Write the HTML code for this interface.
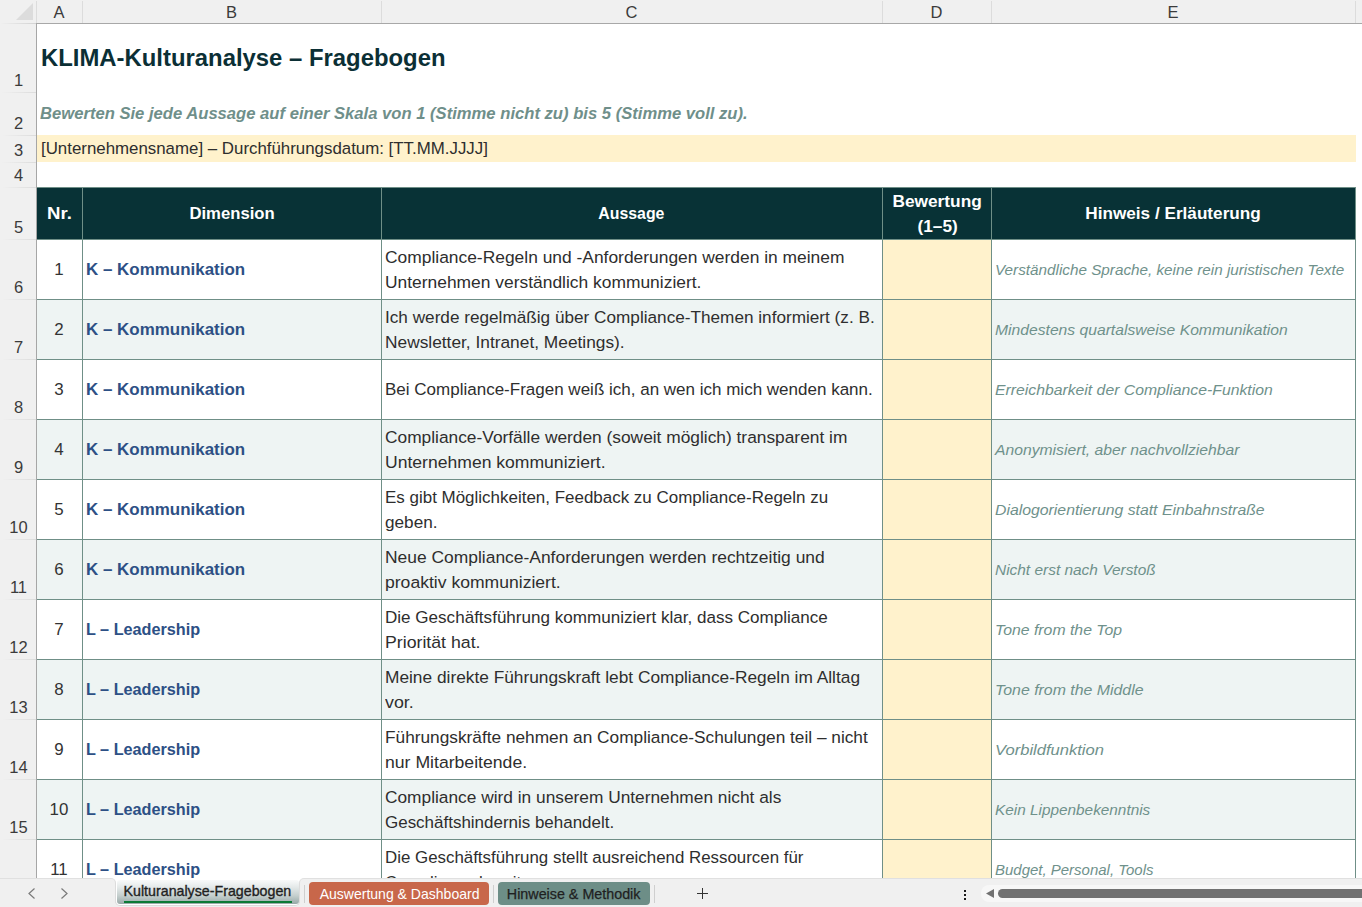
<!DOCTYPE html>
<html><head><meta charset="utf-8"><style>
html,body{margin:0;padding:0;}
body{width:1362px;height:907px;overflow:hidden;position:relative;background:#fff;font-family:"Liberation Sans",sans-serif;}
.t{position:absolute;white-space:nowrap;}
.r{position:absolute;}
</style></head><body>
<div class="r" style="left:0px;top:0px;width:1362px;height:23px;background:#f0f0f0;"></div>
<div class="r" style="left:0px;top:23px;width:36px;height:1px;background:linear-gradient(to right,#f0f0f0,#d2d2d2);"></div>
<div class="r" style="left:36px;top:23px;width:1326px;height:1px;background:#a8a8a8;"></div>
<svg class="r" style="left:16px;top:3px" width="18" height="18"><polygon points="17,0 17,17 0,17" fill="#dcdcdc"/></svg>
<div class="r" style="left:36px;top:1px;width:1px;height:22px;background:#dcdcdc;"></div>
<div class="r" style="left:82px;top:1px;width:1px;height:22px;background:#dcdcdc;"></div>
<div class="r" style="left:381px;top:1px;width:1px;height:22px;background:#dcdcdc;"></div>
<div class="r" style="left:882px;top:1px;width:1px;height:22px;background:#dcdcdc;"></div>
<div class="r" style="left:991px;top:1px;width:1px;height:22px;background:#dcdcdc;"></div>
<div class="r" style="left:1355px;top:1px;width:1px;height:22px;background:#dcdcdc;"></div>
<div id="t0" class="t" style="left:36px;top:1.78px;width:46px;font-size:16.5px;line-height:21px;color:#3b3b3b;font-weight:normal;font-style:normal;text-align:center;">A</div>
<div id="t1" class="t" style="left:82px;top:1.78px;width:299px;font-size:16.5px;line-height:21px;color:#3b3b3b;font-weight:normal;font-style:normal;text-align:center;">B</div>
<div id="t2" class="t" style="left:381px;top:1.78px;width:501px;font-size:16.5px;line-height:21px;color:#3b3b3b;font-weight:normal;font-style:normal;text-align:center;">C</div>
<div id="t3" class="t" style="left:882px;top:1.78px;width:109px;font-size:16.5px;line-height:21px;color:#3b3b3b;font-weight:normal;font-style:normal;text-align:center;">D</div>
<div id="t4" class="t" style="left:991px;top:1.78px;width:364px;font-size:16.5px;line-height:21px;color:#3b3b3b;font-weight:normal;font-style:normal;text-align:center;">E</div>
<div class="r" style="left:0px;top:24px;width:36px;height:883px;background:#f0f0f0;"></div>
<div class="r" style="left:36px;top:24px;width:1px;height:883px;background:#a6a6a6;"></div>
<div class="r" style="left:0px;top:92px;width:36px;height:1px;background:linear-gradient(to right,#f0f0f0 5%,#dcdcdc);"></div>
<div id="t5" class="t" style="left:0px;top:70.18px;width:37px;font-size:16.5px;line-height:21px;color:#3b3b3b;font-weight:normal;font-style:normal;text-align:center;">1</div>
<div class="r" style="left:0px;top:135px;width:36px;height:1px;background:linear-gradient(to right,#f0f0f0 5%,#dcdcdc);"></div>
<div id="t6" class="t" style="left:0px;top:113.18px;width:37px;font-size:16.5px;line-height:21px;color:#3b3b3b;font-weight:normal;font-style:normal;text-align:center;">2</div>
<div class="r" style="left:0px;top:162px;width:36px;height:1px;background:linear-gradient(to right,#f0f0f0 5%,#dcdcdc);"></div>
<div id="t7" class="t" style="left:0px;top:140.18px;width:37px;font-size:16.5px;line-height:21px;color:#3b3b3b;font-weight:normal;font-style:normal;text-align:center;">3</div>
<div class="r" style="left:0px;top:187px;width:36px;height:1px;background:linear-gradient(to right,#f0f0f0 5%,#dcdcdc);"></div>
<div id="t8" class="t" style="left:0px;top:165.18px;width:37px;font-size:16.5px;line-height:21px;color:#3b3b3b;font-weight:normal;font-style:normal;text-align:center;">4</div>
<div class="r" style="left:0px;top:239px;width:36px;height:1px;background:linear-gradient(to right,#f0f0f0 5%,#dcdcdc);"></div>
<div id="t9" class="t" style="left:0px;top:217.18px;width:37px;font-size:16.5px;line-height:21px;color:#3b3b3b;font-weight:normal;font-style:normal;text-align:center;">5</div>
<div class="r" style="left:0px;top:299px;width:36px;height:1px;background:linear-gradient(to right,#f0f0f0 5%,#dcdcdc);"></div>
<div id="t10" class="t" style="left:0px;top:277.18px;width:37px;font-size:16.5px;line-height:21px;color:#3b3b3b;font-weight:normal;font-style:normal;text-align:center;">6</div>
<div class="r" style="left:0px;top:359px;width:36px;height:1px;background:linear-gradient(to right,#f0f0f0 5%,#dcdcdc);"></div>
<div id="t11" class="t" style="left:0px;top:337.18px;width:37px;font-size:16.5px;line-height:21px;color:#3b3b3b;font-weight:normal;font-style:normal;text-align:center;">7</div>
<div class="r" style="left:0px;top:419px;width:36px;height:1px;background:linear-gradient(to right,#f0f0f0 5%,#dcdcdc);"></div>
<div id="t12" class="t" style="left:0px;top:397.18px;width:37px;font-size:16.5px;line-height:21px;color:#3b3b3b;font-weight:normal;font-style:normal;text-align:center;">8</div>
<div class="r" style="left:0px;top:479px;width:36px;height:1px;background:linear-gradient(to right,#f0f0f0 5%,#dcdcdc);"></div>
<div id="t13" class="t" style="left:0px;top:457.18px;width:37px;font-size:16.5px;line-height:21px;color:#3b3b3b;font-weight:normal;font-style:normal;text-align:center;">9</div>
<div class="r" style="left:0px;top:539px;width:36px;height:1px;background:linear-gradient(to right,#f0f0f0 5%,#dcdcdc);"></div>
<div id="t14" class="t" style="left:0px;top:517.18px;width:37px;font-size:16.5px;line-height:21px;color:#3b3b3b;font-weight:normal;font-style:normal;text-align:center;">10</div>
<div class="r" style="left:0px;top:599px;width:36px;height:1px;background:linear-gradient(to right,#f0f0f0 5%,#dcdcdc);"></div>
<div id="t15" class="t" style="left:0px;top:577.18px;width:37px;font-size:16.5px;line-height:21px;color:#3b3b3b;font-weight:normal;font-style:normal;text-align:center;">11</div>
<div class="r" style="left:0px;top:659px;width:36px;height:1px;background:linear-gradient(to right,#f0f0f0 5%,#dcdcdc);"></div>
<div id="t16" class="t" style="left:0px;top:637.18px;width:37px;font-size:16.5px;line-height:21px;color:#3b3b3b;font-weight:normal;font-style:normal;text-align:center;">12</div>
<div class="r" style="left:0px;top:719px;width:36px;height:1px;background:linear-gradient(to right,#f0f0f0 5%,#dcdcdc);"></div>
<div id="t17" class="t" style="left:0px;top:697.18px;width:37px;font-size:16.5px;line-height:21px;color:#3b3b3b;font-weight:normal;font-style:normal;text-align:center;">13</div>
<div class="r" style="left:0px;top:779px;width:36px;height:1px;background:linear-gradient(to right,#f0f0f0 5%,#dcdcdc);"></div>
<div id="t18" class="t" style="left:0px;top:757.18px;width:37px;font-size:16.5px;line-height:21px;color:#3b3b3b;font-weight:normal;font-style:normal;text-align:center;">14</div>
<div class="r" style="left:0px;top:839px;width:36px;height:1px;background:linear-gradient(to right,#f0f0f0 5%,#dcdcdc);"></div>
<div id="t19" class="t" style="left:0px;top:817.18px;width:37px;font-size:16.5px;line-height:21px;color:#3b3b3b;font-weight:normal;font-style:normal;text-align:center;">15</div>
<div class="r" style="left:0px;top:899px;width:36px;height:1px;background:linear-gradient(to right,#f0f0f0 5%,#dcdcdc);"></div>
<div id="t20" class="t" style="left:0px;top:877.18px;width:37px;font-size:16.5px;line-height:21px;color:#3b3b3b;font-weight:normal;font-style:normal;text-align:center;">16</div>
<div id="t21" class="t" style="left:41px;top:42.68px;font-size:24px;line-height:30px;color:#0b2f35;font-weight:bold;font-style:normal;text-align:left;transform:translateX(0.00px) scaleX(0.9946);transform-origin:left center;">KLIMA-Kulturanalyse – Fragebogen</div>
<div id="t22" class="t" style="left:40px;top:102.58px;font-size:16.5px;line-height:21px;color:#6f8f8a;font-weight:bold;font-style:italic;text-align:left;transform:translateX(0.00px) scaleX(1.0071);transform-origin:left center;">Bewerten Sie jede Aussage auf einer Skala von 1 (Stimme nicht zu) bis 5 (Stimme voll zu).</div>
<div class="r" style="left:37px;top:135px;width:1319px;height:27px;background:#fff2cc;"></div>
<div id="t23" class="t" style="left:41px;top:138.48px;font-size:16.8px;line-height:21px;color:#2e2e2e;font-weight:normal;font-style:normal;text-align:left;transform:translateX(0.00px) scaleX(1.0045);transform-origin:left center;">[Unternehmensname] – Durchführungsdatum: [TT.MM.JJJJ]</div>
<div class="r" style="left:37px;top:187px;width:1318px;height:52px;background:#083236;"></div>
<div class="r" style="left:37px;top:239px;width:1318px;height:60px;background:#ffffff;"></div>
<div class="r" style="left:882px;top:239px;width:109px;height:60px;background:#fff2cc;"></div>
<div class="r" style="left:37px;top:299px;width:1318px;height:60px;background:#eef4f3;"></div>
<div class="r" style="left:882px;top:299px;width:109px;height:60px;background:#fff2cc;"></div>
<div class="r" style="left:37px;top:359px;width:1318px;height:60px;background:#ffffff;"></div>
<div class="r" style="left:882px;top:359px;width:109px;height:60px;background:#fff2cc;"></div>
<div class="r" style="left:37px;top:419px;width:1318px;height:60px;background:#eef4f3;"></div>
<div class="r" style="left:882px;top:419px;width:109px;height:60px;background:#fff2cc;"></div>
<div class="r" style="left:37px;top:479px;width:1318px;height:60px;background:#ffffff;"></div>
<div class="r" style="left:882px;top:479px;width:109px;height:60px;background:#fff2cc;"></div>
<div class="r" style="left:37px;top:539px;width:1318px;height:60px;background:#eef4f3;"></div>
<div class="r" style="left:882px;top:539px;width:109px;height:60px;background:#fff2cc;"></div>
<div class="r" style="left:37px;top:599px;width:1318px;height:60px;background:#ffffff;"></div>
<div class="r" style="left:882px;top:599px;width:109px;height:60px;background:#fff2cc;"></div>
<div class="r" style="left:37px;top:659px;width:1318px;height:60px;background:#eef4f3;"></div>
<div class="r" style="left:882px;top:659px;width:109px;height:60px;background:#fff2cc;"></div>
<div class="r" style="left:37px;top:719px;width:1318px;height:60px;background:#ffffff;"></div>
<div class="r" style="left:882px;top:719px;width:109px;height:60px;background:#fff2cc;"></div>
<div class="r" style="left:37px;top:779px;width:1318px;height:60px;background:#eef4f3;"></div>
<div class="r" style="left:882px;top:779px;width:109px;height:60px;background:#fff2cc;"></div>
<div class="r" style="left:37px;top:839px;width:1318px;height:60px;background:#ffffff;"></div>
<div class="r" style="left:882px;top:839px;width:109px;height:60px;background:#fff2cc;"></div>
<div class="r" style="left:37px;top:299px;width:1318px;height:1px;background:#6f8f87;"></div>
<div class="r" style="left:37px;top:359px;width:1318px;height:1px;background:#6f8f87;"></div>
<div class="r" style="left:37px;top:419px;width:1318px;height:1px;background:#6f8f87;"></div>
<div class="r" style="left:37px;top:479px;width:1318px;height:1px;background:#6f8f87;"></div>
<div class="r" style="left:37px;top:539px;width:1318px;height:1px;background:#6f8f87;"></div>
<div class="r" style="left:37px;top:599px;width:1318px;height:1px;background:#6f8f87;"></div>
<div class="r" style="left:37px;top:659px;width:1318px;height:1px;background:#6f8f87;"></div>
<div class="r" style="left:37px;top:719px;width:1318px;height:1px;background:#6f8f87;"></div>
<div class="r" style="left:37px;top:779px;width:1318px;height:1px;background:#6f8f87;"></div>
<div class="r" style="left:37px;top:839px;width:1318px;height:1px;background:#6f8f87;"></div>
<div class="r" style="left:37px;top:899px;width:1318px;height:1px;background:#6f8f87;"></div>
<div class="r" style="left:82px;top:187px;width:1px;height:720px;background:#6f8f87;"></div>
<div class="r" style="left:381px;top:187px;width:1px;height:720px;background:#6f8f87;"></div>
<div class="r" style="left:882px;top:187px;width:1px;height:720px;background:#6f8f87;"></div>
<div class="r" style="left:991px;top:187px;width:1px;height:720px;background:#6f8f87;"></div>
<div class="r" style="left:1355px;top:187px;width:1px;height:720px;background:#6f8f87;"></div>
<div class="r" style="left:36px;top:187px;width:1px;height:720px;background:#a6a6a6;"></div>
<div class="r" style="left:37px;top:187px;width:1318px;height:1px;background:#6f8f87;"></div>
<div class="r" style="left:37px;top:239px;width:1318px;height:1px;background:#6f8f87;"></div>
<div id="t24" class="t" style="left:36px;top:202.64px;width:46px;font-size:16.9px;line-height:21px;color:#ffffff;font-weight:bold;font-style:normal;text-align:center;transform:translateX(0.50px) scaleX(1.1000);transform-origin:center center;">Nr.</div>
<div id="t25" class="t" style="left:82px;top:202.64px;width:299px;font-size:16.9px;line-height:21px;color:#ffffff;font-weight:bold;font-style:normal;text-align:center;transform:translateX(0.55px) scaleX(0.9871);transform-origin:center center;">Dimension</div>
<div id="t26" class="t" style="left:381px;top:202.64px;width:501px;font-size:16.9px;line-height:21px;color:#ffffff;font-weight:bold;font-style:normal;text-align:center;transform:translateX(-0.10px) scaleX(0.9391);transform-origin:center center;">Aussage</div>
<div id="t27" class="t" style="left:882px;top:190.64px;width:109px;font-size:16.9px;line-height:21px;color:#ffffff;font-weight:bold;font-style:normal;text-align:center;transform:translateX(0.60px) scaleX(1.0235);transform-origin:center center;">Bewertung</div>
<div id="t28" class="t" style="left:882px;top:215.64px;width:109px;font-size:16.9px;line-height:21px;color:#ffffff;font-weight:bold;font-style:normal;text-align:center;transform:translateX(1.15px) scaleX(1.0179);transform-origin:center center;">(1–5)</div>
<div id="t29" class="t" style="left:991px;top:202.64px;width:364px;font-size:16.9px;line-height:21px;color:#ffffff;font-weight:bold;font-style:normal;text-align:center;transform:translateX(0.05px) scaleX(1.0158);transform-origin:center center;">Hinweis / Erläuterung</div>
<div id="t30" class="t" style="left:36px;top:258.64px;width:46px;font-size:16.9px;line-height:21px;color:#333333;font-weight:normal;font-style:normal;text-align:center;">1</div>
<div id="t31" class="t" style="left:86px;top:258.64px;font-size:16.9px;line-height:21px;color:#2d5085;font-weight:bold;font-style:normal;text-align:left;transform:translateX(0.00px) scaleX(1.0032);transform-origin:left center;">K – Kommunikation</div>
<div id="t32" class="t" style="left:385px;top:246.74px;font-size:16.9px;line-height:21px;color:#2e2e2e;font-weight:normal;font-style:normal;text-align:left;transform:translateX(0.00px) scaleX(1.0301);transform-origin:left center;">Compliance-Regeln und -Anforderungen werden in meinem</div>
<div id="t33" class="t" style="left:385px;top:271.74px;font-size:16.9px;line-height:21px;color:#2e2e2e;font-weight:normal;font-style:normal;text-align:left;transform:translateX(0.00px) scaleX(1.0307);transform-origin:left center;">Unternehmen verständlich kommuniziert.</div>
<div id="t34" class="t" style="left:995px;top:260.20px;font-size:15.3px;line-height:19px;color:#6f918b;font-weight:normal;font-style:italic;text-align:left;transform:translateX(0.00px) scaleX(0.9977);transform-origin:left center;">Verständliche Sprache, keine rein juristischen Texte</div>
<div id="t35" class="t" style="left:36px;top:318.64px;width:46px;font-size:16.9px;line-height:21px;color:#333333;font-weight:normal;font-style:normal;text-align:center;">2</div>
<div id="t36" class="t" style="left:86px;top:318.64px;font-size:16.9px;line-height:21px;color:#2d5085;font-weight:bold;font-style:normal;text-align:left;transform:translateX(0.00px) scaleX(1.0032);transform-origin:left center;">K – Kommunikation</div>
<div id="t37" class="t" style="left:385px;top:306.74px;font-size:16.9px;line-height:21px;color:#2e2e2e;font-weight:normal;font-style:normal;text-align:left;transform:translateX(0.00px) scaleX(1.0169);transform-origin:left center;">Ich werde regelmäßig über Compliance-Themen informiert (z. B.</div>
<div id="t38" class="t" style="left:385px;top:331.74px;font-size:16.9px;line-height:21px;color:#2e2e2e;font-weight:normal;font-style:normal;text-align:left;transform:translateX(0.00px) scaleX(1.0253);transform-origin:left center;">Newsletter, Intranet, Meetings).</div>
<div id="t39" class="t" style="left:995px;top:320.20px;font-size:15.3px;line-height:19px;color:#6f918b;font-weight:normal;font-style:italic;text-align:left;transform:translateX(0.00px) scaleX(1.0246);transform-origin:left center;">Mindestens quartalsweise Kommunikation</div>
<div id="t40" class="t" style="left:36px;top:378.64px;width:46px;font-size:16.9px;line-height:21px;color:#333333;font-weight:normal;font-style:normal;text-align:center;">3</div>
<div id="t41" class="t" style="left:86px;top:378.64px;font-size:16.9px;line-height:21px;color:#2d5085;font-weight:bold;font-style:normal;text-align:left;transform:translateX(0.00px) scaleX(1.0032);transform-origin:left center;">K – Kommunikation</div>
<div id="t42" class="t" style="left:385px;top:378.94px;font-size:16.9px;line-height:21px;color:#2e2e2e;font-weight:normal;font-style:normal;text-align:left;transform:translateX(0.00px) scaleX(1.0068);transform-origin:left center;">Bei Compliance-Fragen weiß ich, an wen ich mich wenden kann.</div>
<div id="t43" class="t" style="left:995px;top:380.20px;font-size:15.3px;line-height:19px;color:#6f918b;font-weight:normal;font-style:italic;text-align:left;transform:translateX(0.00px) scaleX(1.0305);transform-origin:left center;">Erreichbarkeit der Compliance-Funktion</div>
<div id="t44" class="t" style="left:36px;top:438.64px;width:46px;font-size:16.9px;line-height:21px;color:#333333;font-weight:normal;font-style:normal;text-align:center;">4</div>
<div id="t45" class="t" style="left:86px;top:438.64px;font-size:16.9px;line-height:21px;color:#2d5085;font-weight:bold;font-style:normal;text-align:left;transform:translateX(0.00px) scaleX(1.0032);transform-origin:left center;">K – Kommunikation</div>
<div id="t46" class="t" style="left:385px;top:426.74px;font-size:16.9px;line-height:21px;color:#2e2e2e;font-weight:normal;font-style:normal;text-align:left;transform:translateX(0.00px) scaleX(1.0260);transform-origin:left center;">Compliance-Vorfälle werden (soweit möglich) transparent im</div>
<div id="t47" class="t" style="left:385px;top:451.74px;font-size:16.9px;line-height:21px;color:#2e2e2e;font-weight:normal;font-style:normal;text-align:left;transform:translateX(0.00px) scaleX(1.0398);transform-origin:left center;">Unternehmen kommuniziert.</div>
<div id="t48" class="t" style="left:995px;top:440.20px;font-size:15.3px;line-height:19px;color:#6f918b;font-weight:normal;font-style:italic;text-align:left;transform:translateX(0.00px) scaleX(1.0268);transform-origin:left center;">Anonymisiert, aber nachvollziehbar</div>
<div id="t49" class="t" style="left:36px;top:498.64px;width:46px;font-size:16.9px;line-height:21px;color:#333333;font-weight:normal;font-style:normal;text-align:center;">5</div>
<div id="t50" class="t" style="left:86px;top:498.64px;font-size:16.9px;line-height:21px;color:#2d5085;font-weight:bold;font-style:normal;text-align:left;transform:translateX(0.00px) scaleX(1.0032);transform-origin:left center;">K – Kommunikation</div>
<div id="t51" class="t" style="left:385px;top:486.74px;font-size:16.9px;line-height:21px;color:#2e2e2e;font-weight:normal;font-style:normal;text-align:left;transform:translateX(0.00px) scaleX(1.0041);transform-origin:left center;">Es gibt Möglichkeiten, Feedback zu Compliance-Regeln zu</div>
<div id="t52" class="t" style="left:385px;top:511.74px;font-size:16.9px;line-height:21px;color:#2e2e2e;font-weight:normal;font-style:normal;text-align:left;transform:translateX(0.00px) scaleX(1.0176);transform-origin:left center;">geben.</div>
<div id="t53" class="t" style="left:995px;top:500.20px;font-size:15.3px;line-height:19px;color:#6f918b;font-weight:normal;font-style:italic;text-align:left;transform:translateX(0.00px) scaleX(1.0330);transform-origin:left center;">Dialogorientierung statt Einbahnstraße</div>
<div id="t54" class="t" style="left:36px;top:558.64px;width:46px;font-size:16.9px;line-height:21px;color:#333333;font-weight:normal;font-style:normal;text-align:center;">6</div>
<div id="t55" class="t" style="left:86px;top:558.64px;font-size:16.9px;line-height:21px;color:#2d5085;font-weight:bold;font-style:normal;text-align:left;transform:translateX(0.00px) scaleX(1.0032);transform-origin:left center;">K – Kommunikation</div>
<div id="t56" class="t" style="left:385px;top:546.74px;font-size:16.9px;line-height:21px;color:#2e2e2e;font-weight:normal;font-style:normal;text-align:left;transform:translateX(0.00px) scaleX(1.0315);transform-origin:left center;">Neue Compliance-Anforderungen werden rechtzeitig und</div>
<div id="t57" class="t" style="left:385px;top:571.74px;font-size:16.9px;line-height:21px;color:#2e2e2e;font-weight:normal;font-style:normal;text-align:left;transform:translateX(0.00px) scaleX(1.0399);transform-origin:left center;">proaktiv kommuniziert.</div>
<div id="t58" class="t" style="left:995px;top:560.20px;font-size:15.3px;line-height:19px;color:#6f918b;font-weight:normal;font-style:italic;text-align:left;transform:translateX(0.00px) scaleX(1.0088);transform-origin:left center;">Nicht erst nach Verstoß</div>
<div id="t59" class="t" style="left:36px;top:618.64px;width:46px;font-size:16.9px;line-height:21px;color:#333333;font-weight:normal;font-style:normal;text-align:center;">7</div>
<div id="t60" class="t" style="left:86px;top:618.64px;font-size:16.9px;line-height:21px;color:#2d5085;font-weight:bold;font-style:normal;text-align:left;transform:translateX(0.00px) scaleX(0.9597);transform-origin:left center;">L – Leadership</div>
<div id="t61" class="t" style="left:385px;top:606.74px;font-size:16.9px;line-height:21px;color:#2e2e2e;font-weight:normal;font-style:normal;text-align:left;transform:translateX(0.00px) scaleX(1.0100);transform-origin:left center;">Die Geschäftsführung kommuniziert klar, dass Compliance</div>
<div id="t62" class="t" style="left:385px;top:631.74px;font-size:16.9px;line-height:21px;color:#2e2e2e;font-weight:normal;font-style:normal;text-align:left;transform:translateX(0.00px) scaleX(1.0489);transform-origin:left center;">Priorität hat.</div>
<div id="t63" class="t" style="left:995px;top:620.20px;font-size:15.3px;line-height:19px;color:#6f918b;font-weight:normal;font-style:italic;text-align:left;transform:translateX(0.00px) scaleX(1.0333);transform-origin:left center;">Tone from the Top</div>
<div id="t64" class="t" style="left:36px;top:678.64px;width:46px;font-size:16.9px;line-height:21px;color:#333333;font-weight:normal;font-style:normal;text-align:center;">8</div>
<div id="t65" class="t" style="left:86px;top:678.64px;font-size:16.9px;line-height:21px;color:#2d5085;font-weight:bold;font-style:normal;text-align:left;transform:translateX(0.00px) scaleX(0.9597);transform-origin:left center;">L – Leadership</div>
<div id="t66" class="t" style="left:385px;top:666.74px;font-size:16.9px;line-height:21px;color:#2e2e2e;font-weight:normal;font-style:normal;text-align:left;transform:translateX(0.00px) scaleX(1.0242);transform-origin:left center;">Meine direkte Führungskraft lebt Compliance-Regeln im Alltag</div>
<div id="t67" class="t" style="left:385px;top:691.74px;font-size:16.9px;line-height:21px;color:#2e2e2e;font-weight:normal;font-style:normal;text-align:left;transform:translateX(0.00px) scaleX(1.0538);transform-origin:left center;">vor.</div>
<div id="t68" class="t" style="left:995px;top:680.20px;font-size:15.3px;line-height:19px;color:#6f918b;font-weight:normal;font-style:italic;text-align:left;transform:translateX(0.00px) scaleX(1.0378);transform-origin:left center;">Tone from the Middle</div>
<div id="t69" class="t" style="left:36px;top:738.64px;width:46px;font-size:16.9px;line-height:21px;color:#333333;font-weight:normal;font-style:normal;text-align:center;">9</div>
<div id="t70" class="t" style="left:86px;top:738.64px;font-size:16.9px;line-height:21px;color:#2d5085;font-weight:bold;font-style:normal;text-align:left;transform:translateX(0.00px) scaleX(0.9597);transform-origin:left center;">L – Leadership</div>
<div id="t71" class="t" style="left:385px;top:726.74px;font-size:16.9px;line-height:21px;color:#2e2e2e;font-weight:normal;font-style:normal;text-align:left;transform:translateX(0.00px) scaleX(1.0222);transform-origin:left center;">Führungskräfte nehmen an Compliance-Schulungen teil – nicht</div>
<div id="t72" class="t" style="left:385px;top:751.74px;font-size:16.9px;line-height:21px;color:#2e2e2e;font-weight:normal;font-style:normal;text-align:left;transform:translateX(0.00px) scaleX(1.0437);transform-origin:left center;">nur Mitarbeitende.</div>
<div id="t73" class="t" style="left:995px;top:740.20px;font-size:15.3px;line-height:19px;color:#6f918b;font-weight:normal;font-style:italic;text-align:left;transform:translateX(0.00px) scaleX(1.0830);transform-origin:left center;">Vorbildfunktion</div>
<div id="t74" class="t" style="left:36px;top:798.64px;width:46px;font-size:16.9px;line-height:21px;color:#333333;font-weight:normal;font-style:normal;text-align:center;">10</div>
<div id="t75" class="t" style="left:86px;top:798.64px;font-size:16.9px;line-height:21px;color:#2d5085;font-weight:bold;font-style:normal;text-align:left;transform:translateX(0.00px) scaleX(0.9597);transform-origin:left center;">L – Leadership</div>
<div id="t76" class="t" style="left:385px;top:786.74px;font-size:16.9px;line-height:21px;color:#2e2e2e;font-weight:normal;font-style:normal;text-align:left;transform:translateX(0.00px) scaleX(1.0246);transform-origin:left center;">Compliance wird in unserem Unternehmen nicht als</div>
<div id="t77" class="t" style="left:385px;top:811.74px;font-size:16.9px;line-height:21px;color:#2e2e2e;font-weight:normal;font-style:normal;text-align:left;transform:translateX(0.00px) scaleX(1.0044);transform-origin:left center;">Geschäftshindernis behandelt.</div>
<div id="t78" class="t" style="left:995px;top:800.20px;font-size:15.3px;line-height:19px;color:#6f918b;font-weight:normal;font-style:italic;text-align:left;transform:translateX(0.00px) scaleX(1.0032);transform-origin:left center;">Kein Lippenbekenntnis</div>
<div id="t79" class="t" style="left:36px;top:858.64px;width:46px;font-size:16.9px;line-height:21px;color:#333333;font-weight:normal;font-style:normal;text-align:center;">11</div>
<div id="t80" class="t" style="left:86px;top:858.64px;font-size:16.9px;line-height:21px;color:#2d5085;font-weight:bold;font-style:normal;text-align:left;transform:translateX(0.00px) scaleX(0.9597);transform-origin:left center;">L – Leadership</div>
<div id="t81" class="t" style="left:385px;top:846.74px;font-size:16.9px;line-height:21px;color:#2e2e2e;font-weight:normal;font-style:normal;text-align:left;transform:translateX(0.00px) scaleX(0.9993);transform-origin:left center;">Die Geschäftsführung stellt ausreichend Ressourcen für</div>
<div id="t82" class="t" style="left:385px;top:871.74px;font-size:16.9px;line-height:21px;color:#2e2e2e;font-weight:normal;font-style:normal;text-align:left;">Compliance bereit.</div>
<div id="t83" class="t" style="left:995px;top:860.20px;font-size:15.3px;line-height:19px;color:#6f918b;font-weight:normal;font-style:italic;text-align:left;transform:translateX(0.00px) scaleX(0.9790);transform-origin:left center;">Budget, Personal, Tools</div>
<div class="r" style="left:0;top:878px;width:116px;height:29px;background:#f0f0f0;border-top:1px solid #e0e0e0;border-right:1px solid #dcdcdc;border-top-right-radius:5px;box-sizing:border-box"></div>
<div class="r" style="left:299px;top:878px;width:1063px;height:29px;background:#f0f0f0;border-top:1px solid #e0e0e0;border-left:1px solid #dcdcdc;border-top-left-radius:5px;box-sizing:border-box"></div>
<div class="r" style="left:105px;top:903px;width:205px;height:4px;background:#f0f0f0"></div>
<div class="r" style="left:115px;top:884px;width:185px;height:22px;background:#ffffff;border:1px solid #dcdcdc;border-top:none;border-radius:0 0 5px 5px;box-sizing:border-box"></div>
<div class="r" style="left:116px;top:878px;width:183px;height:8px;background:#ffffff"></div>
<svg class="r" style="left:26px;top:887px" width="12" height="13"><polyline points="8.5,1.5 3,6.5 8.5,11.5" fill="none" stroke="#7a7a7a" stroke-width="1.2"/></svg>
<svg class="r" style="left:58px;top:887px" width="12" height="13"><polyline points="3.5,1.5 9,6.5 3.5,11.5" fill="none" stroke="#7a7a7a" stroke-width="1.2"/></svg>
<div class="r" style="left:117px;top:880px;width:182px;height:24px;background:linear-gradient(#f9fafa 0%,#e4e9e9 30%,#c5cfce 65%,#97a9a7 100%);border-radius:3px"></div>
<div class="r" style="left:124px;top:901px;width:168px;height:2px;background:#0b7a36"></div>
<div id="t84" class="t" style="left:117px;top:882.05px;width:182px;font-size:14.3px;line-height:18px;color:#1f1f1f;font-weight:normal;font-style:normal;text-align:center;transform:translateX(-0.60px) scaleX(0.9952);transform-origin:center center;-webkit-text-stroke:0.35px #1f1f1f;">Kulturanalyse-Fragebogen</div>
<div class="r" style="left:304px;top:885px;width:1px;height:18px;background:#cfcfcf;"></div>
<div class="r" style="left:309px;top:882px;width:180px;height:23px;background:#c8674a;border-radius:4px"></div>
<div id="t85" class="t" style="left:309px;top:885.05px;width:180px;font-size:14.3px;line-height:18px;color:#ffffff;font-weight:normal;font-style:normal;text-align:center;transform:translateX(0.55px) scaleX(0.9810);transform-origin:center center;">Auswertung &amp; Dashboard</div>
<div class="r" style="left:493px;top:885px;width:1px;height:18px;background:#cfcfcf;"></div>
<div class="r" style="left:498px;top:882px;width:152px;height:23px;background:#6d8e87;border-radius:4px"></div>
<div id="t86" class="t" style="left:498px;top:885.05px;width:152px;font-size:14.3px;line-height:18px;color:#1f1f1f;font-weight:normal;font-style:normal;text-align:center;transform:translateX(-0.35px) scaleX(1.0008);transform-origin:center center;-webkit-text-stroke:0.25px #1f1f1f;">Hinweise &amp; Methodik</div>
<div class="r" style="left:654px;top:885px;width:1px;height:18px;background:#cfcfcf;"></div>
<div class="r" style="left:697px;top:892.7px;width:11px;height:1.5px;background:#333;"></div>
<div class="r" style="left:701.7px;top:888px;width:1.5px;height:11px;background:#333;"></div>
<div class="r" style="left:964px;top:889.8px;width:2.2px;height:2.2px;background:#1a1a1a;"></div>
<div class="r" style="left:964px;top:894px;width:2.2px;height:2.2px;background:#1a1a1a;"></div>
<div class="r" style="left:964px;top:898.2px;width:2.2px;height:2.2px;background:#1a1a1a;"></div>
<div class="r" style="left:981px;top:885px;width:400px;height:17px;background:#f7f7f7;border-radius:8px"></div>
<svg class="r" style="left:986px;top:889px" width="9" height="9"><polygon points="8,0 8,9 0,4.5" fill="#717171"/></svg>
<div class="r" style="left:998px;top:889px;width:380px;height:9px;background:#717171;border-radius:4.5px"></div>
</body></html>
